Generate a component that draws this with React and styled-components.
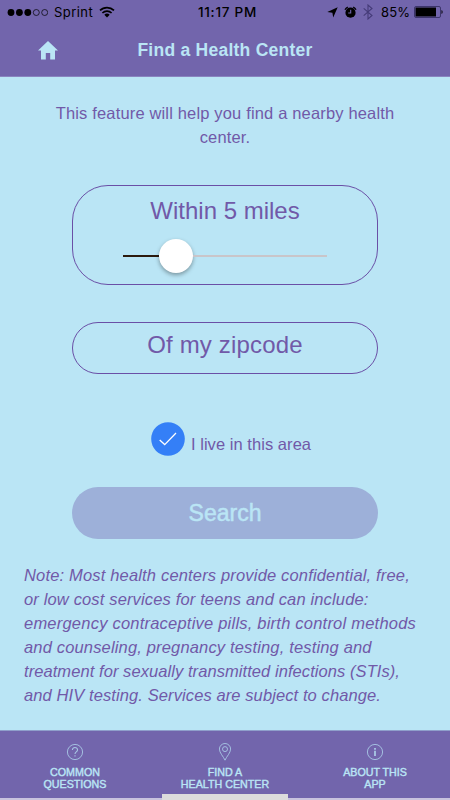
import React from 'react';
import styled, { createGlobalStyle } from 'styled-components';

const PURPLE = '#7265ac';
const SKY = '#bae5f5';
const INK = '#7159a8';

const GlobalStyle = createGlobalStyle`
  * {
    box-sizing: border-box;
  }

  body {
    margin: 0;
    font-family: 'Liberation Sans', Arial, sans-serif;
  }
`;

const Screen = styled.div`
  display: flex;
  flex-direction: column;
  width: 450px;
  height: 800px;
  overflow: hidden;
  background: ${SKY};
  color: ${INK};
`;

const Header = styled.header`
  height: 77px;
  background: ${PURPLE};
  border-bottom: 1px solid #8a84bf;
`;

const StatusBar = styled.div`
  display: grid;
  grid-template-columns: 1fr auto 1fr;
  align-items: center;
  height: 24px;
  padding: 0 7px;
  color: #000;
  font-family: Inter, sans-serif;
  font-size: 13px;
`;

const Carrier = styled.div`
  display: flex;
  align-items: center;
  gap: 6px;
  letter-spacing: 0.45px;
`;

const Clock = styled.div`
  padding-left: 5px;
  font-size: 13.5px;
  font-weight: 500;
  letter-spacing: 0.75px;
`;

const Indicators = styled.div`
  display: flex;
  align-items: center;
  justify-content: flex-end;
  gap: 6px;
`;

const Percent = styled.span`
  margin: 0 -2px 0 2px;
  letter-spacing: 0.1px;
`;

const TitleBar = styled.div`
  display: grid;
  grid-template-columns: 96px 1fr 96px;
  align-items: center;
  height: 52px;
`;

const HomeButton = styled.a`
  display: flex;
  justify-content: center;
`;

const Title = styled.h1`
  margin: 0;
  color: ${SKY};
  font-size: 17.5px;
  font-weight: bold;
  letter-spacing: 0.25px;
  line-height: 24px;
  text-align: center;
  white-space: nowrap;
`;

const Content = styled.main`
  display: flex;
  flex-direction: column;
  flex: 1;
  padding: 24px 24px 0;
`;

const Intro = styled.p`
  margin: 0 0 36px;
  font-size: 16.5px;
  letter-spacing: 0.16px;
  line-height: 24px;
  text-align: center;
  white-space: nowrap;
`;

const Field = styled.div`
  width: 306px;
  height: ${({ $height }) => $height}px;
  margin: 0 auto ${({ $gap }) => $gap}px;
  padding-top: ${({ $top }) => $top}px;
  border: 1px solid #6a4fa6;
  border-radius: 36px;
  font-size: 24px;
  letter-spacing: ${({ $spacing }) => $spacing || 0}px;
  line-height: 28px;
  text-align: center;
`;

const Slider = styled.div`
  display: flex;
  align-items: center;
  width: 204px;
  height: 34px;
  margin: 14px auto 0;
`;

const Track = styled.div`
  width: ${({ $width }) => $width};
  flex: ${({ $width }) => ($width ? 'none' : 1)};
  height: 2px;
  background: ${({ $color }) => $color};
`;

const Thumb = styled.div`
  width: 34px;
  height: 34px;
  border-radius: 50%;
  background: #fff;
  box-shadow: 0 2px 4px rgba(0, 0, 0, 0.35);
`;

const CheckRow = styled.label`
  display: flex;
  justify-content: center;
  height: 34px;
  margin-bottom: 31px;
  padding-left: 12px;
  font-size: 16.5px;
  letter-spacing: 0.05px;
`;

const CheckLabel = styled.span`
  padding: 12px 0 0 6px;
  line-height: 20px;
`;

const SearchButton = styled.button`
  width: 306px;
  height: 52px;
  margin: 0 auto 24px;
  padding: 0;
  border: 0;
  border-radius: 26px;
  background: #9db0d9;
  color: ${SKY};
  font-family: inherit;
  font-size: 23px;
  -webkit-text-stroke: 0.5px ${SKY};
`;

const Note = styled.p`
  margin: 0;
  font-size: 16.5px;
  font-style: italic;
  line-height: 24px;
  white-space: nowrap;
`;

const NoteLine = styled.span`
  display: block;
  letter-spacing: ${({ $spacing }) => $spacing}px;
`;

const TabBar = styled.nav`
  position: relative;
  display: grid;
  grid-template-columns: repeat(3, 1fr);
  height: 70px;
  border-top: 1px solid #8f9fcb;
  border-bottom: 2px solid #c9c3de;
  background: ${PURPLE};
`;

const Tab = styled.a`
  display: flex;
  flex-direction: column;
  align-items: center;
  padding-top: 12px;
  color: ${SKY};
  font-size: 10.7px;
  line-height: 12px;
  text-align: center;
  -webkit-text-stroke: 0.4px ${SKY};

  svg {
    margin-bottom: 5px;
  }
`;

const HomeHandle = styled.div`
  position: absolute;
  bottom: -2px;
  left: 162px;
  width: 126px;
  height: 6px;
  background: #dcdcdc;
`;

const SignalIcon = () => (
  <svg width="41" height="9" viewBox="0 0 41 9">
    {[4, 12.4, 20.8].map((x) => (
      <circle key={x} cx={x} cy="4.5" r="3.4" />
    ))}
    {[29.3, 37.7].map((x) => (
      <circle key={x} cx={x} cy="4.5" r="3" fill="none" stroke="#000" strokeWidth="0.7" />
    ))}
  </svg>
);

const WifiIcon = () => (
  <svg width="16" height="12" viewBox="0 0 16 12" fill="none" stroke="#000" strokeWidth="1.7">
    <path d="M1 4.4a10 10 0 0 1 14 0M3.4 7a6.6 6.6 0 0 1 9.2 0" />
    <path d="M5.3 8.8a4 4 0 0 1 5.4 0L8 11.6z" fill="#000" stroke="none" />
  </svg>
);

const LocationIcon = () => (
  <svg width="11" height="11" viewBox="0 0 11 11">
    <path d="M10.7.3 6.2 10.6 5.4 5.7.3 4.9z" />
  </svg>
);

const AlarmIcon = () => (
  <svg width="13" height="13" viewBox="0 0 13 13">
    <circle cx="6.5" cy="6.7" r="5.1" />
    <path d="M1 3.7a5 5 0 0 1 2.8-2.6M12 3.7a5 5 0 0 0-2.8-2.6" fill="none" stroke="#000" strokeWidth="1.3" />
    <path d="M6.7 3.8v3.2H4.2" fill="none" stroke={PURPLE} strokeWidth="1.1" />
  </svg>
);

const BluetoothIcon = () => (
  <svg width="10" height="16" viewBox="0 0 10 16" fill="none" stroke="#453b78" strokeWidth="1.1">
    <path d="M.7 4.3 9 11.5 5 15V1l4 3.5L.7 11.7" />
  </svg>
);

const BatteryIcon = () => (
  <svg width="29" height="12" viewBox="0 0 29 12">
    <rect x=".5" y=".5" width="26" height="11" rx="1.5" fill="none" stroke="#3d356c" />
    <rect x="1.5" y="1.5" width="20.5" height="9" />
    <path d="M27.5 4c1.5.5 1.5 3.5 0 4z" />
  </svg>
);

const HomeIcon = () => (
  <svg width="20" height="19" viewBox="0 0 20 19" fill={SKY}>
    <path d="M10 0 0 9.6h3v8.9h4.8V12h4.4v6.5H17V9.6h3z" />
  </svg>
);

const CheckIcon = () => (
  <svg width="34" height="34" viewBox="0 0 34 34">
    <circle cx="17" cy="17" r="16.8" fill="#347ff7" />
    <path d="m8.7 18 5 4.6L25 11" fill="none" stroke="#fff" strokeWidth="1.3" />
  </svg>
);

const QuestionIcon = () => (
  <svg width="18" height="18" viewBox="0 0 18 18" fill="none" stroke="#a8c8e5" strokeWidth="0.9">
    <circle cx="9" cy="9" r="7.6" />
    <path d="M6.4 7C6.4 3.6 11.6 3.8 11.5 6.900 11.400 8.900 9 8.800 9 11M9 12.300v1.300" strokeWidth="1.1" />
  </svg>
);

const PinIcon = () => (
  <svg width="18" height="18" viewBox="0 0 18 18" fill="none" stroke="#a8c8e5" strokeWidth="0.9">
    <path d="M9 17.2C7.5 13.6 3.4 9.800 3.400 6.100a5.600 5.600 0 0 1 11.200 0c0 3.700-4.100 7.500-5.600 11.100z" />
    <circle cx="9" cy="6.1" r="2.5" />
  </svg>
);

const InfoIcon = () => (
  <svg width="18" height="18" viewBox="0 0 18 18" fill="none" stroke="#a8c8e5" strokeWidth="0.9">
    <circle cx="9" cy="9" r="7.6" />
    <path d="M9 7.7v5.3M9 5v1.7" strokeWidth="1.8" />
  </svg>
);

const noteLines = [
  { text: 'Note: Most health centers provide confidential, free,', spacing: 0.17 },
  { text: 'or low cost services for teens and can include:', spacing: 0.15 },
  { text: 'emergency contraceptive pills, birth control methods', spacing: 0.22 },
  { text: 'and counseling, pregnancy testing, testing and', spacing: 0.16 },
  { text: 'treatment for sexually transmitted infections (STIs),', spacing: 0.07 },
  { text: 'and HIV testing. Services are subject to change.', spacing: 0.1 },
];

const tabs = [
  { icon: QuestionIcon, lines: ['COMMON', 'QUESTIONS'] },
  { icon: PinIcon, lines: ['FIND A', 'HEALTH CENTER'] },
  { icon: InfoIcon, lines: ['ABOUT THIS', 'APP'] },
];

const App = () => {
  return (
    <>
      <GlobalStyle />
      <Screen>
        <Header>
          <StatusBar>
            <Carrier>
              <SignalIcon />
              <span>Sprint</span>
              <WifiIcon />
            </Carrier>
            <Clock>11:17 PM</Clock>
            <Indicators>
              <LocationIcon />
              <AlarmIcon />
              <BluetoothIcon />
              <Percent>85%</Percent>
              <BatteryIcon />
            </Indicators>
          </StatusBar>
          <TitleBar>
            <HomeButton>
              <HomeIcon />
            </HomeButton>
            <Title>Find a Health Center</Title>
          </TitleBar>
        </Header>
        <Content>
          <Intro>
            This feature will help you find a nearby health
            <br />
            center.
          </Intro>
          <Field $height={100} $gap={37} $top={11}>
            Within 5 miles
            <Slider>
              <Track $width="36px" $color="#2b1a0d" />
              <Thumb />
              <Track $color="#c9c5c9" />
            </Slider>
          </Field>
          <Field $height={52} $gap={48} $top={8} $spacing={0.18}>
            Of my zipcode
          </Field>
          <CheckRow>
            <CheckIcon />
            <CheckLabel>I live in this area</CheckLabel>
          </CheckRow>
          <SearchButton>Search</SearchButton>
          <Note>
            {noteLines.map(({ text, spacing }) => (
              <NoteLine key={text} $spacing={spacing}>
                {text}
              </NoteLine>
            ))}
          </Note>
        </Content>
        <TabBar>
          {tabs.map(({ icon: Icon, lines }) => (
            <Tab key={lines[0]}>
              <Icon />
              <span>{lines[0]}</span>
              <span>{lines[1]}</span>
            </Tab>
          ))}
          <HomeHandle />
        </TabBar>
      </Screen>
    </>
  );
};

export default App;
